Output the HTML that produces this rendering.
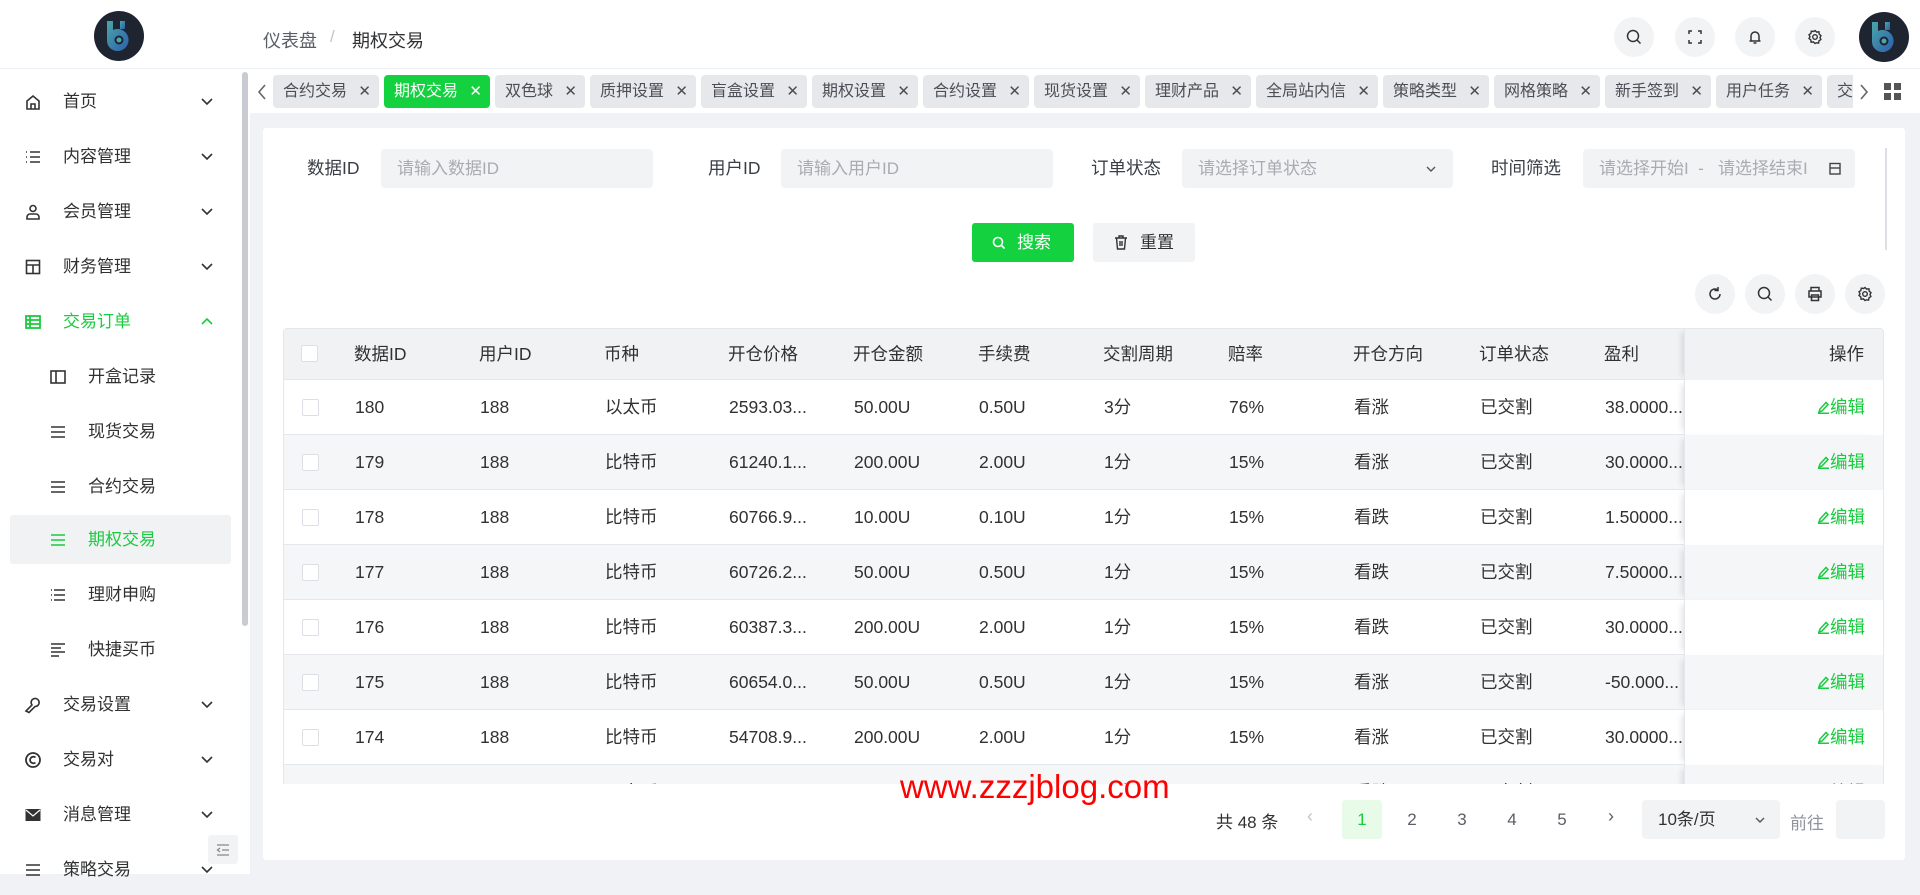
<!DOCTYPE html>
<html><head><meta charset="utf-8">
<style>
*{box-sizing:border-box;margin:0;padding:0}
body{width:1920px;height:874px;overflow:hidden;background:#f0f2f5;font-family:"Liberation Sans","Noto Sans CJK SC",sans-serif;color:#303133;position:relative}
.a{position:absolute}
.hdr{left:0;top:0;width:1920px;height:69px;background:#fff;border-bottom:1px solid #ebeef2}
.side{left:0;top:69px;width:250px;height:805px;background:#fff}
.mi{position:absolute;left:0;width:240px;height:50px;font-size:17px;color:#303133;line-height:50px}
.mi .ic{position:absolute;left:24px;top:16px;width:18px;height:18px}
.mi .tx{position:absolute;left:63px}
.mi .ch{position:absolute;left:199px;top:18px;width:16px;height:14px}
.sub .ic{left:49px}
.sub .tx{left:88px}
.tab{position:absolute;top:6px;height:33px;background:#e6e8eb;border-radius:4px;font-size:16px;line-height:33px;color:#4a4f57;padding-left:10px}
.tab span{position:absolute;right:8px;top:0;font-size:15px}
.lbl{position:absolute;top:149px;line-height:39px;font-size:17.5px;color:#3a3f47}
.inp{position:absolute;top:149px;height:39px;background:#f2f3f5;border-radius:4px;font-size:17px;line-height:39px;color:#a8abb2;padding-left:16px}
.circ{position:absolute;width:40px;height:40px;border-radius:50%;background:#f2f3f5}
.circ svg{position:absolute;left:12px;top:12px}
.row{position:absolute;left:283px;width:1601px;height:55px;border-bottom:1px solid #e4e7ec;font-size:17.5px;line-height:55px}
.row div{position:absolute;top:0;white-space:nowrap}
.cb{width:17px;height:17px;border:1px solid #dcdfe6;border-radius:2px;background:#fff;top:19px!important;left:18px}
.ed{color:#19cc3f;right:20px}
</style></head><body>

<div class="a hdr"></div>
<svg class="a" style="left:94px;top:11px" width="50" height="50" viewBox="0 0 50 50"><circle cx="25" cy="25" r="25" fill="#1f2431"/><defs><linearGradient id="g" x1="0" y1="0" x2="1" y2="1"><stop offset="0" stop-color="#4aa6a8"/><stop offset="1" stop-color="#2d5fae"/></linearGradient></defs><path d="M13 10h6v9a11 11 0 1 1 0 20h0a10 10 0 0 1-6-9z" fill="url(#g)"/><path d="M26 10h5v8h-5z" fill="url(#g)"/><circle cx="25" cy="29" r="4.5" fill="#1f2431"/><circle cx="25" cy="29" r="2.5" fill="#4aa6a8"/></svg>
<div class="a" style="left:263px;top:27px;font-size:18px;color:#5a5e66">仪表盘</div>
<div class="a" style="left:330px;top:27px;font-size:17px;color:#c0c4cc">/</div>
<div class="a" style="left:352px;top:27px;font-size:18px;color:#303133">期权交易</div>
<div class="circ" style="left:1614px;top:17px"><svg width="16" height="16" viewBox="0 0 16 16" fill="none" stroke="#333" stroke-width="1.5"><circle cx="7" cy="7" r="5.5"/><path d="M11 11l3.5 3.5"/></svg></div>
<div class="circ" style="left:1675px;top:17px"><svg width="16" height="16" viewBox="0 0 16 16" fill="none" stroke="#333" stroke-width="1.5"><path d="M2 5V2h3M11 2h3v3M14 11v3h-3M5 14H2v-3"/></svg></div>
<div class="circ" style="left:1735px;top:17px"><svg width="16" height="16" viewBox="0 0 16 16" fill="none" stroke="#333" stroke-width="1.5"><path d="M4 12V7a4 4 0 0 1 8 0v5zM2.5 12h11M6.5 14h3"/></svg></div>
<div class="circ" style="left:1795px;top:17px"><svg width="16" height="16" viewBox="0 0 16 16" fill="none" stroke="#333" stroke-width="1.4"><circle cx="8" cy="8" r="2.3"/><path d="M8 1.5l1.6 1.6 2.3-.3.3 2.3L14 6.7 13 8.5l.9 2-1.9 1.3-.4 2.3-2.3-.3L8 14.5l-1.6-1.6-2.3.3-.3-2.3L2 9.5 3 7.7 2 5.7l1.9-1.2.4-2.3 2.3.3z"/></svg></div>
<svg class="a" style="left:1859px;top:12px" width="50" height="50" viewBox="0 0 50 50"><circle cx="25" cy="25" r="25" fill="#1f2431"/><path d="M13 10h6v9a11 11 0 1 1 0 20h0a10 10 0 0 1-6-9z" fill="url(#g)"/><path d="M26 10h5v8h-5z" fill="url(#g)"/><circle cx="25" cy="29" r="4.5" fill="#1f2431"/><circle cx="25" cy="29" r="2.5" fill="#4aa6a8"/></svg>

<div class="a side"></div>
<div class="a" style="left:242px;top:72px;width:6px;height:554px;background:#c8ccd2;border-radius:3px"></div>

<div class="mi" style="top:77px"><svg class="ic" viewBox="0 0 18 18" fill="none" stroke="#333" stroke-width="1.6"><path d="M3 8l6-5 6 5v8H3zM7 16v-5h4v5"/></svg><span class="tx">首页</span><svg class="ch" viewBox="0 0 16 14" fill="none" stroke="#333" stroke-width="1.6"><path d="M3 4l5 5 5-5"/></svg></div>
<div class="mi" style="top:132px"><svg class="ic" viewBox="0 0 18 18" fill="none" stroke="#333" stroke-width="1.6"><path d="M2 4h1M6 4h10M2 9h1M6 9h10M2 14h1M6 14h10"/></svg><span class="tx">内容管理</span><svg class="ch" viewBox="0 0 16 14" fill="none" stroke="#333" stroke-width="1.6"><path d="M3 4l5 5 5-5"/></svg></div>
<div class="mi" style="top:187px"><svg class="ic" viewBox="0 0 18 18" fill="none" stroke="#333" stroke-width="1.6"><circle cx="9" cy="5.5" r="3"/><path d="M3 16v-2a3 3 0 0 1 3-3h6a3 3 0 0 1 3 3v2z"/></svg><span class="tx">会员管理</span><svg class="ch" viewBox="0 0 16 14" fill="none" stroke="#333" stroke-width="1.6"><path d="M3 4l5 5 5-5"/></svg></div>
<div class="mi" style="top:242px"><svg class="ic" viewBox="0 0 18 18" fill="none" stroke="#333" stroke-width="1.6"><rect x="2.5" y="2.5" width="13" height="13"/><path d="M2.5 7h13M9 7v8.5"/></svg><span class="tx">财务管理</span><svg class="ch" viewBox="0 0 16 14" fill="none" stroke="#333" stroke-width="1.6"><path d="M3 4l5 5 5-5"/></svg></div>
<div class="mi" style="top:297px;color:#19cc3f"><svg class="ic" viewBox="0 0 18 18" fill="none" stroke="#19cc3f" stroke-width="1.8"><rect x="2" y="3" width="14" height="12"/><path d="M2 7h14M2 11h14M6 3v12"/></svg><span class="tx">交易订单</span><svg class="ch" viewBox="0 0 16 14" fill="none" stroke="#19cc3f" stroke-width="1.6"><path d="M3 9l5-5 5 5"/></svg></div>
<div class="mi sub" style="top:352px"><svg class="ic" viewBox="0 0 18 18" fill="none" stroke="#333" stroke-width="1.6"><rect x="2" y="3" width="14" height="12"/><path d="M7 3v12"/></svg><span class="tx">开盒记录</span></div>
<div class="mi sub" style="top:407px"><svg class="ic" viewBox="0 0 18 18" fill="none" stroke="#333" stroke-width="1.6"><path d="M2 4h14M2 9h14M2 14h14"/></svg><span class="tx">现货交易</span></div>
<div class="mi sub" style="top:462px"><svg class="ic" viewBox="0 0 18 18" fill="none" stroke="#333" stroke-width="1.6"><path d="M2 4h14M2 9h14M2 14h14"/></svg><span class="tx">合约交易</span></div>
<div class="a" style="left:10px;top:515px;width:221px;height:49px;background:#f1f2f4;border-radius:3px"></div>
<div class="mi sub" style="top:515px;color:#19cc3f"><svg class="ic" viewBox="0 0 18 18" fill="none" stroke="#19cc3f" stroke-width="1.6"><path d="M2 4h14M2 9h14M2 14h14"/></svg><span class="tx">期权交易</span></div>
<div class="mi sub" style="top:570px"><svg class="ic" viewBox="0 0 18 18" fill="none" stroke="#333" stroke-width="1.6"><path d="M2 4h1M5 4h11M2 9h1M5 9h11M2 14h1M5 14h11"/></svg><span class="tx">理财申购</span></div>
<div class="mi sub" style="top:625px"><svg class="ic" viewBox="0 0 18 18" fill="none" stroke="#333" stroke-width="1.5"><path d="M2 3h14M2 7h10M2 11h14M2 15h8"/></svg><span class="tx">快捷买币</span></div>
<div class="mi" style="top:680px"><svg class="ic" viewBox="0 0 18 18" fill="none" stroke="#333" stroke-width="1.6"><path d="M2 15l6-6a4 4 0 1 1 3 1.5L5 16.5z"/></svg><span class="tx">交易设置</span><svg class="ch" viewBox="0 0 16 14" fill="none" stroke="#333" stroke-width="1.6"><path d="M3 4l5 5 5-5"/></svg></div>
<div class="mi" style="top:735px"><svg class="ic" viewBox="0 0 18 18" fill="none" stroke="#333" stroke-width="1.8"><circle cx="9" cy="9" r="7"/><path d="M11.5 6.5a3.3 3.3 0 1 0 0 5"/></svg><span class="tx">交易对</span><svg class="ch" viewBox="0 0 16 14" fill="none" stroke="#333" stroke-width="1.6"><path d="M3 4l5 5 5-5"/></svg></div>
<div class="mi" style="top:790px"><svg class="ic" viewBox="0 0 18 18"><rect x="1.5" y="3" width="15" height="12" fill="#333"/><path d="M2 4l7 6 7-6" fill="none" stroke="#fff" stroke-width="1.2"/></svg><span class="tx">消息管理</span><svg class="ch" viewBox="0 0 16 14" fill="none" stroke="#333" stroke-width="1.6"><path d="M3 4l5 5 5-5"/></svg></div>
<div class="mi" style="top:845px"><svg class="ic" viewBox="0 0 18 18" fill="none" stroke="#333" stroke-width="1.6"><path d="M2 4h14M2 9h14M2 14h14"/></svg><span class="tx">策略交易</span><svg class="ch" viewBox="0 0 16 14" fill="none" stroke="#333" stroke-width="1.6"><path d="M3 4l5 5 5-5"/></svg></div>
<div class="a" style="left:208px;top:835px;width:30px;height:29px;background:#f2f3f5;border-radius:3px"><svg style="position:absolute;left:7px;top:7px" width="16" height="16" viewBox="0 0 16 16" fill="none" stroke="#888" stroke-width="1.3"><path d="M2 3h12M7 8h7M2 13h12M5 6L2.5 8 5 10"/></svg></div>

<div class="a" style="left:250px;top:69px;width:1670px;height:44px;background:#fff"></div>
<svg class="a" style="left:256px;top:82px" width="12" height="20" viewBox="0 0 12 20" fill="none" stroke="#666" stroke-width="1.6"><path d="M9 3L3 10l6 7"/></svg>
<div class="a" style="left:273px;top:69px;width:1580px;height:44px;overflow:hidden">
<div style="position:relative;left:-273px">
<div class="tab" style="left:273px;width:106px">合约交易<span>✕</span></div>
<div class="tab" style="left:384px;width:106px;background:#13d13f;color:#fff">期权交易<span>✕</span></div>
<div class="tab" style="left:495px;width:90px">双色球<span>✕</span></div>
<div class="tab" style="left:590px;width:106px">质押设置<span>✕</span></div>
<div class="tab" style="left:701px;width:106px">盲盒设置<span>✕</span></div>
<div class="tab" style="left:812px;width:106px">期权设置<span>✕</span></div>
<div class="tab" style="left:923px;width:106px">合约设置<span>✕</span></div>
<div class="tab" style="left:1034px;width:106px">现货设置<span>✕</span></div>
<div class="tab" style="left:1145px;width:106px">理财产品<span>✕</span></div>
<div class="tab" style="left:1256px;width:122px">全局站内信<span>✕</span></div>
<div class="tab" style="left:1383px;width:106px">策略类型<span>✕</span></div>
<div class="tab" style="left:1494px;width:106px">网格策略<span>✕</span></div>
<div class="tab" style="left:1605px;width:106px">新手签到<span>✕</span></div>
<div class="tab" style="left:1716px;width:106px">用户任务<span>✕</span></div>
<div class="tab" style="left:1827px;width:106px">交易对<span>✕</span></div>
</div></div>
<svg class="a" style="left:1858px;top:82px" width="12" height="20" viewBox="0 0 12 20" fill="none" stroke="#666" stroke-width="1.6"><path d="M3 3l6 7-6 7"/></svg>
<svg class="a" style="left:1884px;top:83px" width="17" height="17" viewBox="0 0 17 17" fill="#555"><rect x="0" y="0" width="7" height="7"/><rect x="10" y="0" width="7" height="7"/><rect x="0" y="10" width="7" height="7"/><rect x="10" y="10" width="7" height="7"/></svg>

<div class="a" style="left:263px;top:128px;width:1642px;height:732px;background:#fff;border-radius:3px"></div>
<div class="a" style="left:1885px;top:148px;width:2px;height:102px;background:#dcdfe6"></div>

<div class="lbl" style="left:307px">数据ID</div>
<div class="inp" style="left:381px;width:272px">请输入数据ID</div>
<div class="lbl" style="left:708px">用户ID</div>
<div class="inp" style="left:781px;width:272px">请输入用户ID</div>
<div class="lbl" style="left:1091px">订单状态</div>
<div class="inp" style="left:1182px;width:271px">请选择订单状态<svg style="position:absolute;right:16px;top:15px" width="12" height="10" viewBox="0 0 12 10" fill="none" stroke="#555" stroke-width="1.4"><path d="M2 3l4 4 4-4"/></svg></div>
<div class="lbl" style="left:1491px">时间筛选</div>
<div class="inp" style="left:1583px;width:272px">请选择开始<span style="color:#a8abb2">I</span>&nbsp;&nbsp;-&nbsp;&nbsp;&nbsp;请选择结束<span>I</span><svg style="position:absolute;right:14px;top:13px" width="12" height="13" viewBox="0 0 12 13" fill="none" stroke="#444" stroke-width="1.4"><rect x="1" y="1.5" width="10" height="10.5"/><path d="M1 6h10"/></svg></div>

<div class="a" style="left:972px;top:223px;width:102px;height:39px;background:#13d13f;border-radius:3px;color:#fff;font-size:17px;line-height:39px;padding-left:45px"><svg style="position:absolute;left:20px;top:13px" width="14" height="14" viewBox="0 0 14 14" fill="none" stroke="#fff" stroke-width="1.6"><circle cx="6" cy="6" r="4.5"/><path d="M9.5 9.5l3 3"/></svg>搜索</div>
<div class="a" style="left:1093px;top:223px;width:102px;height:39px;background:#f2f3f5;border-radius:3px;color:#303133;font-size:17px;line-height:39px;padding-left:47px"><svg style="position:absolute;left:21px;top:12px" width="14" height="15" viewBox="0 0 14 15" fill="none" stroke="#333" stroke-width="1.4"><path d="M1 3h12M5 3V1h4v2M2.5 3l1 11h7l1-11M6 6v5M8 6v5"/></svg>重置</div>

<div class="circ" style="left:1695px;top:274px"><svg width="16" height="16" viewBox="0 0 16 16" fill="none" stroke="#333" stroke-width="1.5"><path d="M13 8A5 5 0 1 1 11 4M11 1v3.5h-3.5"/></svg></div>
<div class="circ" style="left:1745px;top:274px"><svg width="16" height="16" viewBox="0 0 16 16" fill="none" stroke="#333" stroke-width="1.5"><circle cx="7" cy="7" r="5.5"/><path d="M11 11l3.5 3.5"/></svg></div>
<div class="circ" style="left:1795px;top:274px"><svg width="16" height="16" viewBox="0 0 16 16" fill="none" stroke="#333" stroke-width="1.5"><path d="M4 5V1.5h8V5M2 5h12v6H2zM4.5 9h7v5.5h-7z"/></svg></div>
<div class="circ" style="left:1845px;top:274px"><svg width="16" height="16" viewBox="0 0 16 16" fill="none" stroke="#333" stroke-width="1.4"><circle cx="8" cy="8" r="2.3"/><path d="M8 1.5l1.6 1.6 2.3-.3.3 2.3L14 6.7 13 8.5l.9 2-1.9 1.3-.4 2.3-2.3-.3L8 14.5l-1.6-1.6-2.3.3-.3-2.3L2 9.5 3 7.7 2 5.7l1.9-1.2.4-2.3 2.3.3z"/></svg></div>

<div class="a" style="left:283px;top:328px;width:1601px;height:456px;overflow:hidden;border:1px solid #e4e7ec;border-bottom:none;border-radius:4px 4px 0 0">
<div style="position:relative;left:-284px;top:-329px">
<div class="row" style="top:328px;height:52px;line-height:52px;background:#f1f2f4">
<div class="cb" style="top:17px!important"></div><div style="left:71px">数据ID</div><div style="left:196px">用户ID</div><div style="left:321px">币种</div><div style="left:445px">开仓价格</div><div style="left:570px">开仓金额</div><div style="left:695px">手续费</div><div style="left:820px">交割周期</div><div style="left:945px">赔率</div><div style="left:1070px">开仓方向</div><div style="left:1196px">订单状态</div><div style="left:1321px">盈利</div><div style="left:1401px;width:200px;height:52px;background:#f1f2f4;border-left:1px solid #e4e7ec;box-shadow:-6px 0 6px -4px rgba(0,0,0,.12);text-align:right;padding-right:20px">操作</div></div>
</div></div>
<div id="rows"></div>
<script>
var d=[["180","以太币","2593.03...","50.00U","0.50U","3分","76%","看涨","38.0000..."],
["179","比特币","61240.1...","200.00U","2.00U","1分","15%","看涨","30.0000..."],
["178","比特币","60766.9...","10.00U","0.10U","1分","15%","看跌","1.50000..."],
["177","比特币","60726.2...","50.00U","0.50U","1分","15%","看跌","7.50000..."],
["176","比特币","60387.3...","200.00U","2.00U","1分","15%","看跌","30.0000..."],
["175","比特币","60654.0...","50.00U","0.50U","1分","15%","看涨","-50.000..."],
["174","比特币","54708.9...","200.00U","2.00U","1分","15%","看涨","30.0000..."],
["173","以太币","2440.00...","200.00U","2.00U","1分","70%","看跌","-200.00"]];
var h='<div class="a" style="left:283px;top:380px;width:1601px;height:404px;overflow:hidden;border-left:1px solid #e4e7ec;border-right:1px solid #e4e7ec">';
for(var i=0;i<d.length;i++){var r=d[i],bg=i%2?'#f5f6f8':'#fff';
h+='<div class="row" style="left:0;top:'+(i*55)+'px;background:'+bg+'"><div class="cb"></div>';
var xs=[71,196,321,445,570,695,820,945,1070,1196,1321];
var v=[r[0],"188",r[1],r[2],r[3],r[4],r[5],r[6],r[7],"已交割",r[8]];
for(var j=0;j<11;j++)h+='<div style="left:'+xs[j]+'px">'+v[j]+'</div>';
h+='<div style="left:1400px;width:201px;height:55px;background:'+bg+';border-left:1px solid #e4e7ec;box-shadow:-6px 0 6px -4px rgba(0,0,0,.12)"><div class="ed"><svg width="13" height="14" viewBox="0 0 13 14" fill="none" stroke="#19cc3f" stroke-width="1.5" style="vertical-align:-1px"><path d="M2 12l1-3 6-6.5 2 2L5 11zM1 13.2h11"/></svg>编辑</div></div></div>';}
h+='</div>';document.getElementById('rows').outerHTML=h;
</script>

<div class="a" style="left:900px;top:768px;font-size:33px;color:#ff0000;font-family:'Liberation Sans',sans-serif">www.zzzjblog.com</div>

<div class="a" style="left:1216px;top:808px;font-size:17px;color:#303133">共 48 条</div>
<div class="a" style="left:1307px;top:806px;font-size:18px;color:#c0c4cc">‹</div>
<div class="a" style="left:1342px;top:800px;width:40px;height:39px;background:#e8fbe9;border-radius:3px;color:#19cc3f;font-size:17px;text-align:center;line-height:39px">1</div>
<div class="a" style="left:1402px;top:800px;width:20px;text-align:center;line-height:39px;font-size:17px;color:#5a5e66">2</div>
<div class="a" style="left:1452px;top:800px;width:20px;text-align:center;line-height:39px;font-size:17px;color:#5a5e66">3</div>
<div class="a" style="left:1502px;top:800px;width:20px;text-align:center;line-height:39px;font-size:17px;color:#5a5e66">4</div>
<div class="a" style="left:1552px;top:800px;width:20px;text-align:center;line-height:39px;font-size:17px;color:#5a5e66">5</div>
<div class="a" style="left:1608px;top:806px;font-size:18px;color:#5a5e66">›</div>
<div class="a" style="left:1642px;top:800px;width:138px;height:39px;background:#f2f3f5;border-radius:4px;font-size:17px;line-height:39px;padding-left:16px;color:#303133">10条/页<svg style="position:absolute;right:14px;top:15px" width="12" height="10" viewBox="0 0 12 10" fill="none" stroke="#555" stroke-width="1.4"><path d="M2 3l4 4 4-4"/></svg></div>
<div class="a" style="left:1790px;top:809px;font-size:17px;color:#909399">前往</div>
<div class="a" style="left:1836px;top:800px;width:49px;height:39px;background:#f2f3f5;border-radius:4px"></div>
</body></html>
